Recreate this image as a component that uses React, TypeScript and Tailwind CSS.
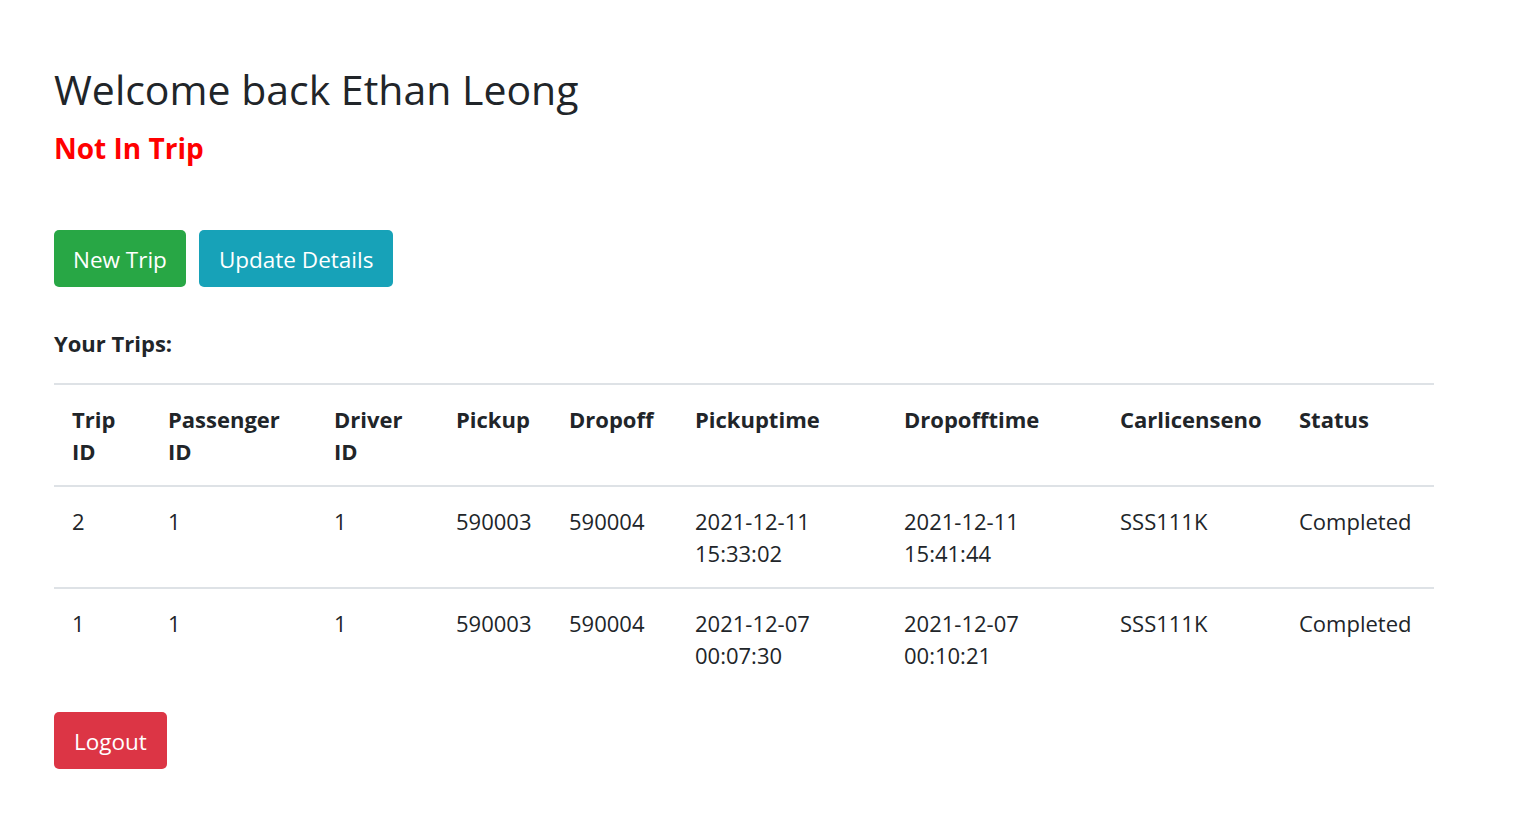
const trips = [
  { id: '2', passenger: '1', driver: '1', pickup: '590003', dropoff: '590004', pickupDate: '2021-12-11', pickupClock: '15:33:02', dropoffDate: '2021-12-11', dropoffClock: '15:41:44', car: 'SSS111K', status: 'Completed' },
  { id: '1', passenger: '1', driver: '1', pickup: '590003', dropoff: '590004', pickupDate: '2021-12-07', pickupClock: '00:07:30', dropoffDate: '2021-12-07', dropoffClock: '00:10:21', car: 'SSS111K', status: 'Completed' },
];

export default function App() {
  return (
    <div className="min-h-screen bg-white text-[#212529] font-['Open_Sans',sans-serif]">
      <div className="pl-[54px] pt-[60px] pb-[40px]">
        {/* 見出し */}
        <h1 className="text-[41px] leading-[58px] font-medium">Welcome back Ethan Leong</h1>
        <h4 className="mt-[10px] text-[28px] leading-[40px] font-bold text-[#ff0000]">Not In Trip</h4>

        {/* ボタン */}
        <div className="mt-[62px] flex gap-[13px]">
          <button className="h-[57px] px-[19px] pt-[3px] rounded-[5px] bg-[#28a745] text-white text-[22.5px]">New Trip</button>
          <button className="h-[57px] px-[20px] pt-[3px] rounded-[5px] bg-[#17a2b8] text-white text-[22.5px]">Update Details</button>
        </div>

        <h5 className="mt-[40px] text-[22px] leading-[32px] font-bold">Your Trips:</h5>

        {/* トリップ一覧 */}
        <table className="mt-[24px] w-[1380px] table-fixed border-collapse text-[22px] leading-[32px]">
          <colgroup>
            <col className="w-[96px]" />
            <col className="w-[166px]" />
            <col className="w-[122px]" />
            <col className="w-[113px]" />
            <col className="w-[126px]" />
            <col className="w-[209px]" />
            <col className="w-[216px]" />
            <col className="w-[179px]" />
            <col className="w-[153px]" />
          </colgroup>
          <thead>
            <tr className="border-t-2 border-b-2 border-[#dee2e6] text-left align-top">
              <th className="px-[18px] py-[18px] font-bold">Trip<br />ID</th>
              <th className="px-[18px] py-[18px] font-bold">Passenger<br />ID</th>
              <th className="px-[18px] py-[18px] font-bold">Driver<br />ID</th>
              <th className="px-[18px] py-[18px] font-bold">Pickup</th>
              <th className="px-[18px] py-[18px] font-bold">Dropoff</th>
              <th className="px-[18px] py-[18px] font-bold">Pickuptime</th>
              <th className="px-[18px] py-[18px] font-bold">Dropofftime</th>
              <th className="px-[18px] py-[18px] font-bold">Carlicenseno</th>
              <th className="px-[18px] py-[18px] font-bold">Status</th>
            </tr>
          </thead>
          <tbody>
            {trips.map((t, i) => (
              <tr key={t.id} className={`align-top ${i > 0 ? 'border-t-2 border-[#dee2e6]' : ''}`}>
                <td className="px-[18px] py-[18px]">{t.id}</td>
                <td className="px-[18px] py-[18px]">{t.passenger}</td>
                <td className="px-[18px] py-[18px]">{t.driver}</td>
                <td className="px-[18px] py-[18px]">{t.pickup}</td>
                <td className="px-[18px] py-[18px]">{t.dropoff}</td>
                <td className="px-[18px] py-[18px]">{t.pickupDate}<br />{t.pickupClock}</td>
                <td className="px-[18px] py-[18px]">{t.dropoffDate}<br />{t.dropoffClock}</td>
                <td className="px-[18px] py-[18px]">{t.car}</td>
                <td className="px-[18px] py-[18px]">{t.status}</td>
              </tr>
            ))}
          </tbody>
        </table>

        <button className="mt-[23px] h-[57px] px-[20px] pt-[3px] rounded-[5px] bg-[#dc3545] text-white text-[22.5px]">Logout</button>
      </div>
    </div>
  );
}
